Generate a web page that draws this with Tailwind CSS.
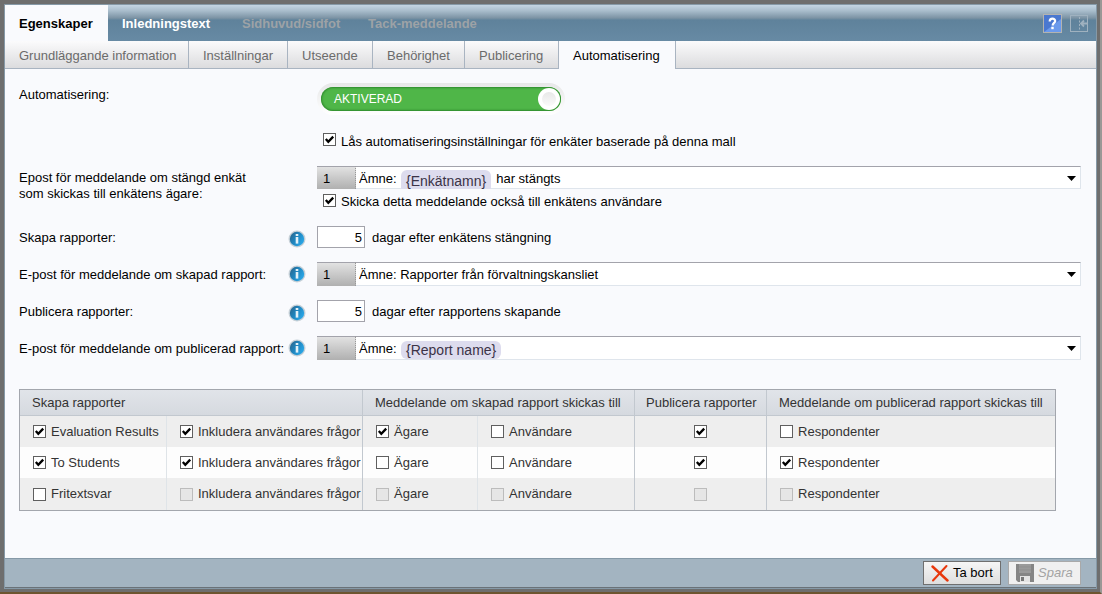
<!DOCTYPE html>
<html lang="sv">
<head>
<meta charset="utf-8">
<meta name="viewport" content="width=device-width, initial-scale=1">
<title>Egenskaper – Automatisering</title>
<script src="https://cdn.jsdelivr.net/npm/@tailwindcss/browser@4"></script>
</head>
<body class="flex min-h-screen flex-col border-r-2 border-b-2 border-r-[#9a9896] border-b-[#6d5530] bg-[#6e6e6e] pt-1 pr-[3px] pb-[3px] pl-1 font-['Liberation_Sans',Arial,sans-serif] text-[13px] leading-4 text-black">
<svg class="absolute size-0" aria-hidden="true">
  <defs><linearGradient id="infoBlue" x1="0" y1="0" x2="1" y2="0.6"><stop offset="0" stop-color="#2d6185"/><stop offset="0.5" stop-color="#1f84bd"/><stop offset="1" stop-color="#2ba6e6"/></linearGradient></defs>
  <symbol id="tick" viewBox="0 0 13 13"><path d="M2.8 6 L5.3 8.8 L10.2 3.6" fill="none" stroke="#000" stroke-width="2.3"/></symbol>
  <symbol id="info" viewBox="0 0 18 18">
    <circle cx="9" cy="9" r="8.5" fill="#c6d0d7"/><circle cx="9" cy="9" r="7.2" fill="url(#infoBlue)"/>
    <rect x="7.7" y="4" width="2.6" height="2" fill="#e4f1f8"/><rect x="7.7" y="7" width="2.6" height="6.6" fill="#e4f1f8"/>
  </symbol>
</svg>
<div class="flex grow flex-col border border-[#8699a7] bg-[#f9fafd]">
  <header>
    <nav class="flex h-9 items-stretch bg-linear-[180deg,#c4d5e3_0%,#a9bdcc_16%,#7c93a4_36%,#5f829b_42%,#678aa4_100%] pt-px font-bold">
      <a href="#" class="-mt-px flex w-[103px] items-center bg-[#f9fafd] px-3.5 pt-px">Egenskaper</a>
      <a href="#" class="flex w-[120px] items-center px-3.5 text-white">Inledningstext</a>
      <a href="#" class="flex w-[126px] items-center px-3.5 text-[#9da2a6]">Sidhuvud/sidfot</a>
      <a href="#" class="flex items-center px-3.5 text-[#9da2a6]">Tack-meddelande</a>
      <div class="ml-auto flex items-center gap-2 pr-2">
        <button type="button" aria-label="Hjälp"><svg class="block size-[19px]" viewBox="0 0 19 19"><rect x="0.5" y="0.5" width="18" height="18" fill="#4a78d0" stroke="#b3b3b0"/><path d="M1 18 L18 5 V18Z" fill="#6b9aec"/><path d="M6.7 7.4 C6.7 3.8 12.4 3.8 12.2 7.2 C12 9 9.6 9 9.6 11.6" fill="none" stroke="#fff" stroke-width="2.2"/><rect x="8.3" y="12.8" width="2.4" height="2.4" fill="#fff"/></svg></button>
        <button type="button" aria-label="Dölj panel"><svg class="block size-[18px]" viewBox="0 0 18 18" fill="none" stroke="#9fb1bf"><rect x="0.5" y="0.5" width="17" height="16"/><path d="M9.5 2V16" stroke-dasharray="2 1.5"/><path d="M17 8.5H11M14 5.5L11 8.5L14 11.5" stroke-width="1.8"/></svg></button>
      </div>
    </nav>
    <nav class="flex h-7 text-[#6b6b6b]">
      <a href="#" class="flex w-[184px] items-center border-r border-b border-[#a9b4c1] bg-linear-to-b from-[#fbfbfc] to-[#dcdcde] pt-0.5 pl-3.5">Grundläggande information</a>
      <a href="#" class="flex w-[99px] items-center border-r border-b border-[#a9b4c1] bg-linear-to-b from-[#fbfbfc] to-[#dcdcde] pt-0.5 pl-3.5">Inställningar</a>
      <a href="#" class="flex w-[85px] items-center border-r border-b border-[#a9b4c1] bg-linear-to-b from-[#fbfbfc] to-[#dcdcde] pt-0.5 pl-3.5">Utseende</a>
      <a href="#" class="flex w-[92px] items-center border-r border-b border-[#a9b4c1] bg-linear-to-b from-[#fbfbfc] to-[#dcdcde] pt-0.5 pl-3.5">Behörighet</a>
      <a href="#" class="flex w-[94px] items-center border-r border-b border-[#a9b4c1] bg-linear-to-b from-[#fbfbfc] to-[#dcdcde] pt-0.5 pl-3.5">Publicering</a>
      <a href="#" aria-current="page" class="flex w-[116px] items-center pt-px pl-3.5 text-black">Automatisering</a>
      <div class="grow border-b border-l border-[#a9b4c1] bg-linear-to-b from-[#fbfbfc] to-[#dcdcde]"></div>
    </nav>
  </header>

  <main class="grow pt-3.5 pr-[15px] pb-10 pl-3.5">
    <form>
      <div class="flex items-start">
        <label for="auto" class="w-[298px] shrink-0 pt-1">Automatisering:</label>
        <div class="rounded-full bg-linear-to-b from-[#e7e7e8] to-white p-1">
          <div class="grid w-60 items-center">
            <input id="auto" type="checkbox" role="switch" checked class="col-start-1 row-start-1 h-6 w-full appearance-none rounded-full bg-[#4fb648] shadow-[inset_0_0_2px_1px_#2f8a2c]">
            <span class="pointer-events-none col-start-1 row-start-1 pl-[13px] text-xs text-white">AKTIVERAD</span>
            <span class="pointer-events-none col-start-1 row-start-1 mr-px grid size-[22px] place-items-center justify-self-end rounded-full bg-white"><span class="size-3.5 rounded-full bg-linear-to-b from-[#e8e8e8] to-[#fafafa]"></span></span>
          </div>
        </div>
      </div>
      <div class="mt-[18px] flex pl-[304px]">
        <span class="grid h-4 shrink-0"><input id="lock" type="checkbox" checked class="peer col-start-1 row-start-1 size-[13px] appearance-none border border-[#5f5f5f] bg-white"><svg class="pointer-events-none col-start-1 row-start-1 hidden size-[13px] peer-checked:block"><use href="#tick"/></svg></span>
        <label for="lock" class="pt-px pl-[5px]">Lås automatiseringsinställningar för enkäter baserade på denna mall</label>
      </div>

      <div class="mt-4 flex items-start">
        <label for="mail1" class="w-[298px] shrink-0 pt-1">Epost för meddelande om stängd enkät<br>som skickas till enkätens ägare:</label>
        <div class="grow">
          <div class="relative">
            <select id="mail1" class="block h-[23px] w-full appearance-none border border-[#dfe5ec] border-t-[#a3a3ab] bg-white pt-0.5 pl-[41px]"><option>Ämne:</option></select>
            <div class="pointer-events-none absolute inset-0 flex items-center">
              <span class="flex h-full w-[39px] items-center border-t border-r border-t-[#a3a3ab] border-r-[#999] bg-linear-to-b from-[#e2e2e2] to-[#b0b0b0] pt-px pl-1.5 [border-right-style:dotted]">1</span>
              <span class="ml-[45px] self-end rounded-t-md bg-[#dddcee] px-[5px] pt-[3px] text-sm leading-4 text-[#3b3347]">{Enkätnamn}</span>
              <span class="pt-0.5 pl-[5px]">har stängts</span>
              <svg class="mt-px mr-[5px] ml-auto h-[5px] w-[9px]" viewBox="0 0 9 5"><path d="M0 0H9L4.5 5Z"/></svg>
            </div>
          </div>
          <div class="mt-[5px] flex pl-1.5">
            <span class="grid h-4 shrink-0"><input id="also" type="checkbox" checked class="peer col-start-1 row-start-1 size-[13px] appearance-none border border-[#5f5f5f] bg-white"><svg class="pointer-events-none col-start-1 row-start-1 hidden size-[13px] peer-checked:block"><use href="#tick"/></svg></span>
            <label for="also" class="pl-[5px]">Skicka detta meddelande också till enkätens användare</label>
          </div>
        </div>
      </div>

      <div class="mt-4 flex items-center">
        <label for="days1" class="w-[269px] shrink-0 pt-0.5">Skapa rapporter:</label>
        <svg class="mt-1 mr-[11px] size-[18px] shrink-0"><use href="#info"/></svg>
        <input id="days1" type="text" value="5" class="h-[22px] w-12 border border-[#a3a3ab] bg-white pt-px pr-0.5 text-right">
        <span class="pt-0.5 pl-[7px]">dagar efter enkätens stängning</span>
      </div>

      <div class="mt-3.5 flex items-center">
        <label for="mail2" class="w-[269px] shrink-0 pt-0.5">E-post för meddelande om skapad rapport:</label>
        <svg class="mr-[11px] size-[18px] shrink-0"><use href="#info"/></svg>
        <div class="relative grow">
          <select id="mail2" class="block h-6 w-full appearance-none border border-[#dfe5ec] border-t-[#a3a3ab] bg-white pt-0.5 pl-[41px]"><option>Ämne: Rapporter från förvaltningskansliet</option></select>
          <div class="pointer-events-none absolute inset-0 flex items-center">
            <span class="flex h-full w-[39px] items-center border-t border-r border-t-[#a3a3ab] border-r-[#999] bg-linear-to-b from-[#e2e2e2] to-[#b0b0b0] pt-px pl-1.5 [border-right-style:dotted]">1</span>
            <svg class="mt-px mr-[5px] ml-auto h-[5px] w-[9px]" viewBox="0 0 9 5"><path d="M0 0H9L4.5 5Z"/></svg>
          </div>
        </div>
      </div>

      <div class="mt-3.5 flex items-center">
        <label for="days2" class="w-[269px] shrink-0 pt-0.5">Publicera rapporter:</label>
        <svg class="mt-1 mr-[11px] size-[18px] shrink-0"><use href="#info"/></svg>
        <input id="days2" type="text" value="5" class="h-[22px] w-12 border border-[#a3a3ab] bg-white pt-px pr-0.5 text-right">
        <span class="pt-0.5 pl-[7px]">dagar efter rapportens skapande</span>
      </div>

      <div class="mt-3.5 flex items-center">
        <label for="mail3" class="w-[269px] shrink-0 pt-0.5">E-post för meddelande om publicerad rapport:</label>
        <svg class="mr-[11px] size-[18px] shrink-0"><use href="#info"/></svg>
        <div class="relative grow">
          <select id="mail3" class="block h-6 w-full appearance-none border border-[#dfe5ec] border-t-[#a3a3ab] bg-white pt-0.5 pl-[41px]"><option>Ämne:</option></select>
          <div class="pointer-events-none absolute inset-0 flex items-center">
            <span class="flex h-full w-[39px] items-center border-t border-r border-t-[#a3a3ab] border-r-[#999] bg-linear-to-b from-[#e2e2e2] to-[#b0b0b0] pt-px pl-1.5 [border-right-style:dotted]">1</span>
            <span class="mt-1 ml-[45px] rounded-md bg-[#dddcee] px-[5px] py-px text-sm leading-4 text-[#3b3347]">{Report name}</span>
            <svg class="mt-px mr-[5px] ml-auto h-[5px] w-[9px]" viewBox="0 0 9 5"><path d="M0 0H9L4.5 5Z"/></svg>
          </div>
        </div>
      </div>

      <table class="mt-[29px] w-[1037px] table-fixed border-separate border-spacing-0 border border-[#a3a6ad] text-left text-[#333]">
        <colgroup><col class="w-[147px]"><col class="w-[196px]"><col class="w-[115px]"><col class="w-[157px]"><col class="w-[132px]"><col></colgroup>
        <thead>
          <tr class="h-[26px] bg-linear-to-b from-[#e1e4e9] to-[#d5d9df]">
            <th colspan="2" class="border-r border-b border-[#c2c8cf] pl-3 font-normal">Skapa rapporter</th>
            <th colspan="2" class="border-r border-b border-[#c2c8cf] pl-3 font-normal">Meddelande om skapad rapport skickas till</th>
            <th class="border-r border-b border-[#c2c8cf] pl-[11px] font-normal">Publicera rapporter</th>
            <th class="border-b border-[#c2c8cf] pl-3 font-normal">Meddelande om publicerad rapport skickas till</th>
          </tr>
        </thead>
        <tbody id="rows"></tbody>
      </table>
    </form>
  </main>

  <footer class="flex justify-end gap-[7px] border-t border-b border-t-[#8699a7] border-b-[#6a7278] bg-[#a3b4c1] px-[15px] pt-0.5 pb-0.5">
    <button type="button" class="flex h-6 w-[78px] items-center gap-1 border border-[#6f6f6f] bg-linear-to-b from-[#f6f6f6] to-[#dedede] pl-[7px]">
      <svg class="size-[18px] shrink-0" viewBox="0 0 18 18" fill="none" stroke="#e8380d" stroke-linecap="round"><path d="M1.5 2.5L16.5 16.5" stroke-width="2.4"/><path d="M15.5 2L2 16.5" stroke-width="2"/></svg><span class="whitespace-nowrap">Ta bort</span>
    </button>
    <button type="button" disabled class="flex h-6 w-[73px] items-center gap-1 border border-[#a9a9a9] bg-[#f0f0f0] pl-[7px] text-[#a3a3a3] italic">
      <svg class="size-[18px] shrink-0" viewBox="0 0 18 18"><path d="M0 0H18V18H2L0 16Z" fill="#858585"/><rect x="3" y="0" width="12" height="9" fill="#9a9a9a"/><path d="M3 3H15M3 6H15" stroke="#8f8f8f"/><rect x="4" y="12" width="10" height="6" fill="#e4e4e4"/><rect x="5" y="13" width="3" height="4" fill="#777"/></svg>Spara
    </button>
  </footer>
</div>
<script>
const names = ['Evaluation Results', 'To Students', 'Fritextsvar'];
const labels = ['Inkludera användares frågor', 'Ägare', 'Användare', '', 'Respondenter'];
// 1 = ticked, 0 = clear, -1 = disabled
const states = [[1, 1, 1, 0, 1, 0], [1, 1, 0, 0, 1, 1], [0, -1, -1, -1, -1, -1]];
document.getElementById('rows').innerHTML = names.map((name, r) =>
  `<tr class="${r === 2 ? 'h-8' : 'h-[31px]'} ${r === 1 ? 'bg-[#fdfdfd]' : 'bg-[#eeeeee]'}">` + [name, ...labels].map((label, c) => {
    const id = `cell-${r}-${c}`, s = states[r][c];
    const edge = c === 5 ? '' : c === 0 || c === 2 ? 'border-r border-[#dfe4e8]' : 'border-r border-[#c2c8cf]';
    return `<td class="${edge} ${c === 4 ? '' : 'pl-[13px]'}"><div class="flex items-center ${c === 4 ? 'justify-center' : ''}"><span class="grid shrink-0"><input id="${id}" type="checkbox" ${s === 1 ? 'checked' : ''} ${s === -1 ? 'disabled' : ''} ${label ? '' : 'aria-label="Publicera rapporter"'} class="peer col-start-1 row-start-1 size-[13px] appearance-none border border-[#5f5f5f] bg-white disabled:border-[#bcbcbc] disabled:bg-[#e6e6e6]"><svg class="pointer-events-none col-start-1 row-start-1 hidden size-[13px] peer-checked:block"><use href="#tick"/></svg></span>${label ? `<label for="${id}" class="pl-[5px] whitespace-nowrap">${label}</label>` : ''}</div></td>`;
  }).join('') + '</tr>').join('');
</script>
</body>
</html>
